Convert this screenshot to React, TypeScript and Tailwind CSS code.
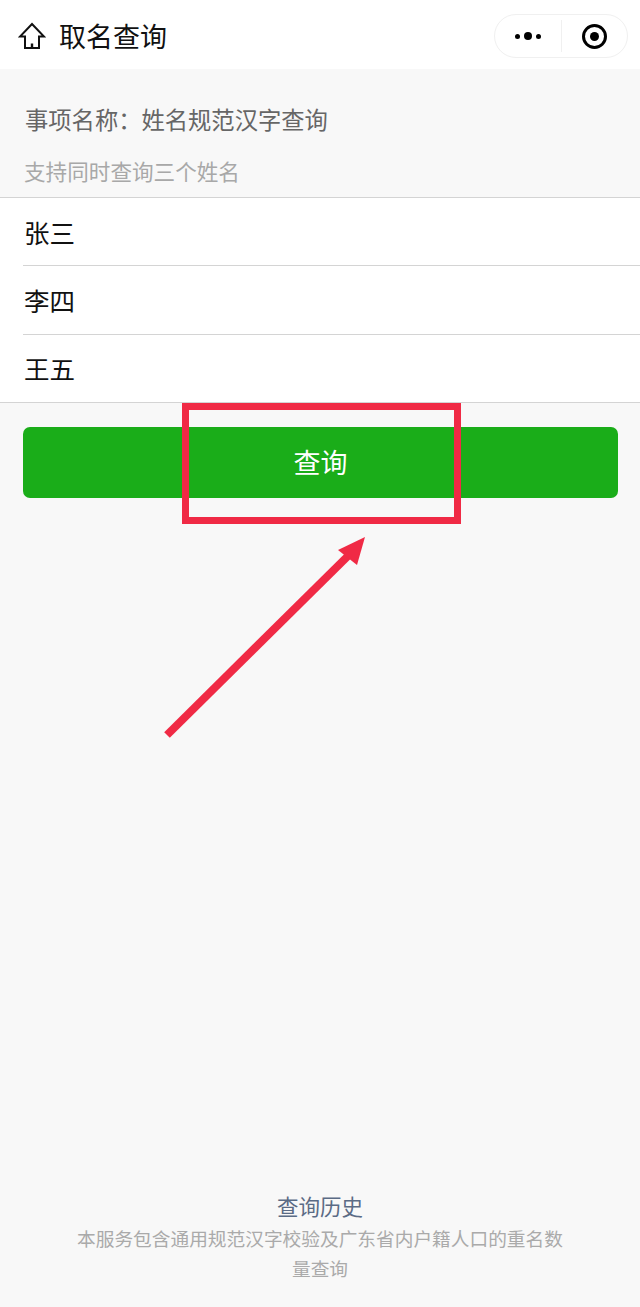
const names = ['张三', '李四', '王五'];

const cjk = { fontFamily: '"Noto Sans CJK SC", "Noto Sans", sans-serif' };

export default function App() {
  return (
    <div className="relative flex h-[1307px] w-[640px] flex-col overflow-hidden bg-[#f8f8f8]" style={cjk}>
      {/* Nav bar */}
      <header className="flex h-[69px] shrink-0 items-center justify-between bg-white pl-[18px] pr-[12px]">
        <div className="mt-[3px] flex items-center gap-[13px]">
          <svg width="28" height="28" viewBox="0 0 28 28" fill="none" stroke="#111" strokeWidth="2" strokeLinejoin="miter">
            <path d="M14 2 L26 14.5 H21 V26 H7 V14.5 H2 Z" />
            <path d="M14 26 V21.5" strokeWidth="2.4" />
          </svg>
          <span className="relative -top-px text-[27px] leading-none text-[#111]">取名查询</span>
        </div>
        <div className="mt-[3px] flex h-[44px] w-[134px] items-center rounded-full border border-[#f0f0f0] bg-white">
          <div className="flex flex-1 items-center justify-center gap-[4px]">
            <span className="h-[5px] w-[5px] rounded-full bg-black" />
            <span className="h-[8px] w-[8px] rounded-full bg-black" />
            <span className="h-[5px] w-[5px] rounded-full bg-black" />
          </div>
          <div className="h-[32px] w-px bg-[#f0f0f0]" />
          <div className="flex flex-1 items-center justify-center">
            <div className="flex h-[25px] w-[25px] items-center justify-center rounded-full border-[3.5px] border-black">
              <span className="h-[9px] w-[9px] rounded-full bg-black" />
            </div>
          </div>
        </div>
      </header>

      {/* Form */}
      <main className="flex flex-1 flex-col">
        <p className="ml-[25px] mt-[36px] text-[23.3px] leading-[28px] text-[#666666]">事项名称：姓名规范汉字查询</p>
        <p className="ml-6 mt-[24px] text-[21.6px] leading-[28px] text-[#a8a8a8]">支持同时查询三个姓名</p>

        <div className="mt-[12px] border-y border-[#d4d4d4] bg-white">
          {names.map((name, i) => (
            <div key={name} className={i > 0 ? 'ml-[23px] border-t border-[#d4d4d4]' : 'ml-[23px]'}>
              <div className="flex h-[67.3px] items-center pl-px text-[25.5px] text-[#111]">{name}</div>
            </div>
          ))}
        </div>

        <button className="ml-[23px] mr-[22px] mt-[24px] flex h-[71px] items-center justify-center rounded-[7px] bg-[#1aad19] text-[27px] text-white">
          查询
        </button>

        {/* Footer links */}
        <footer className="mt-auto flex flex-col items-center pb-[24px]">
          <a className="text-[21.5px] leading-[28px] text-[#5b6b85]">查询历史</a>
          <p className="mt-[3px] w-[490px] text-center text-[18.7px] leading-[30px] text-[#aaaaaa]">
            本服务包含通用规范汉字校验及广东省内户籍人口的重名数量查询
          </p>
        </footer>
      </main>

      {/* Red annotation drawn over the screenshot */}
      <div className="absolute left-[182px] top-[403px] h-[121px] w-[279px] border-[7px] border-[#f02a45]" />
      <svg className="absolute left-[160px] top-[530px]" width="212" height="212" viewBox="0 0 212 212">
        <path d="M7 205 L192 22" stroke="#f02a45" strokeWidth="8" fill="none" />
        <path d="M205 7 L178 20 L197 35 Z" fill="#f02a45" />
      </svg>
    </div>
  );
}
